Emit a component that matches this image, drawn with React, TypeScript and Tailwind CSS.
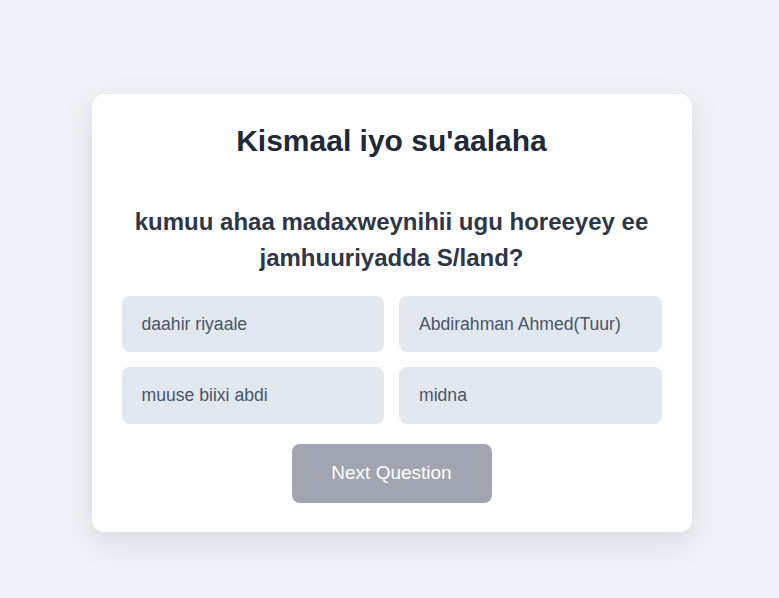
import { useState } from "react";

const options = [
  "daahir riyaale",
  "Abdirahman Ahmed(Tuur)",
  "muuse biixi abdi",
  "midna",
];

export default function App() {
  const [picked, setPicked] = useState<number | null>(null);

  return (
    <div className="flex min-h-[598px] items-center justify-center bg-[#eff2f6] pt-[27px] pl-1 font-['Liberation_Sans',Arial,sans-serif]">
      <div className="w-[600px] rounded-xl bg-white px-[30px] pt-[30px] pb-[29px] shadow-[0_10px_30px_rgba(0,0,0,0.1)]">
        <h1 className="text-center text-[30px] leading-[34px] font-bold text-[#1f2937]">
          Kismaal iyo su'aalaha
        </h1>

        <p className="mt-[46px] text-center text-[24px] leading-[36px] font-bold text-[#2d3748]">
          kumuu ahaa madaxweynihii ugu horeeyey ee jamhuuriyadda S/land?
        </p>

        {/* jawaabaha */}
        <div className="mt-5 grid grid-cols-2 gap-[15px]">
          {options.map((o, i) => (
            <button
              key={o}
              onClick={() => setPicked(i)}
              className={[
                "h-[56.5px] rounded-lg px-5 text-left text-[17.6px] text-[#4a5568]",
                picked === i ? "bg-[#cbd5e1]" : "bg-[#e2e8f0]",
              ].join(" ")}
            >
              {o}
            </button>
          ))}
        </div>

        <div className="mt-5 flex justify-center">
          <button className="h-[59px] w-[200px] rounded-lg bg-[#a0a5b0] text-[19px] text-white">
            Next Question
          </button>
        </div>
      </div>
    </div>
  );
}
